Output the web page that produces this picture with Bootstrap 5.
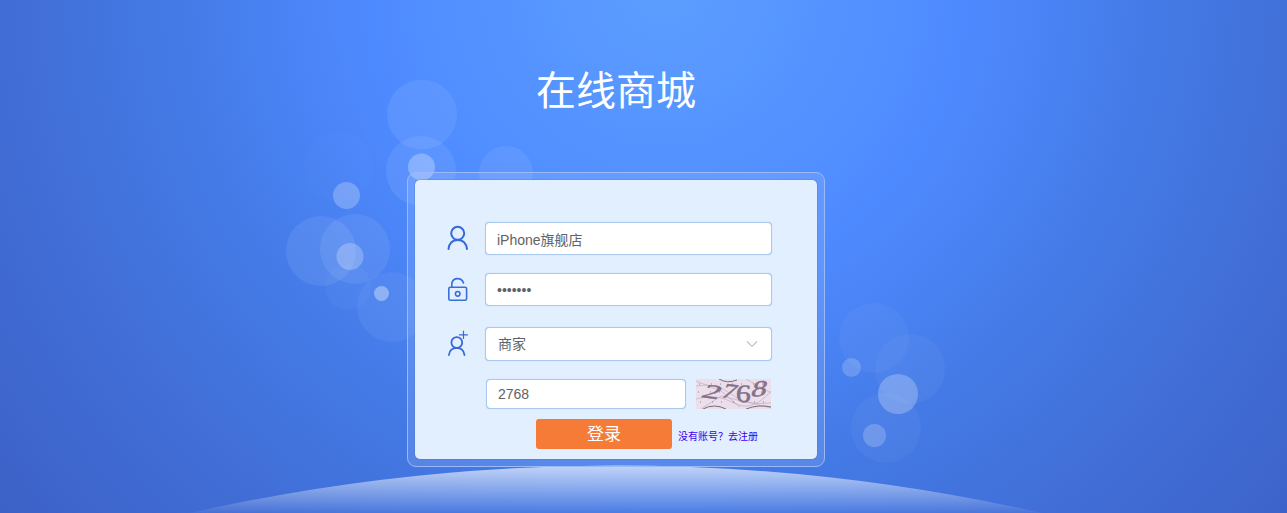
<!DOCTYPE html>
<html lang="zh-CN">
<head>
<meta charset="utf-8">
<title>在线商城</title>
<link rel="stylesheet" href="https://cdn.jsdelivr.net/npm/bootstrap@5.3.0/dist/css/bootstrap.min.css">
<style>
body{height:513px;font-family:"Liberation Sans","Noto Sans CJK SC",sans-serif;font-size:14px;color:#606266;
 background:radial-gradient(circle at 665px -10px,#5c9eff 0,#4e8aff 300px,#447ae6 490px,#416fd7 640px,#3d62c8 830px,#3b5fc4 900px)}
.scene{inset:0;width:1287px;height:513px}
.page-wrap{height:513px;padding-top:58px}
.title{font-size:40px;line-height:60px;font-weight:400;color:#fff;width:418px;margin:0 0 54px 407px;font-family:"Noto Sans CJK SC",sans-serif}
.login-frame{width:418px;height:295px;margin-left:407px;padding:7px;border:1px solid #9bb9f7;border-radius:9px;background:#ffffff1c}
.login-panel{height:279px;background:#e1efff;border-radius:5px;padding:42px 45px 0 32px;box-shadow:0 0 0 1px #4a78d855}
.line{height:34px}
.line+.line{margin-top:17px}
.line+.line.role-line{margin-top:20px}
.line svg.ico{width:24px;height:30px;flex:none;margin:1px 14px 0 0}
.field.form-control{height:33px;width:288px;padding:0 11px;border:1px solid #a9c9ed;border-radius:4px;font-size:14px;color:#606266;box-shadow:0 0 1px #a9c9ed}
.pick.field{height:34px;padding-right:13px;padding-left:12px}
.code-line{margin:18px 0 0 39px}
.code.form-control{height:30px;width:200px;padding-left:11px}
.captcha{width:75px;height:30px;margin-left:10px}
.submit-line{margin:10px 0 0 89px}
.btn-login.btn{width:136px;height:30px;padding:2px 0 0;border:0;border-radius:3px;background:#f57b36;color:#fff;font-size:17px;line-height:28px}
.reg{font-size:10px;color:#3d00f0;margin-left:6px;padding-top:6px;white-space:nowrap;line-height:14px;text-decoration:none}
</style>
</head>
<body class="m-0 overflow-hidden position-relative">
<svg class="scene position-absolute" viewBox="0 0 1287 513" aria-hidden="true">
 <defs><linearGradient id="hill" x1="0" y1="465" x2="0" y2="513" gradientUnits="userSpaceOnUse"><stop offset="0" stop-color="#fff" stop-opacity=".68"/><stop offset="1" stop-color="#fff" stop-opacity=".04"/></linearGradient></defs>
 <g fill="#fff">
 <circle cx="422" cy="114.500" r="35" opacity=".08"/><circle cx="421" cy="171" r="35" opacity=".08"/>
 <circle cx="421.500" cy="167" r="13.500" opacity=".27"/><circle cx="506" cy="173" r="27" opacity=".08"/>
 <circle cx="339" cy="167" r="35" opacity=".015"/><circle cx="346.500" cy="195.500" r="13.500" opacity=".24"/>
 <circle cx="321" cy="251" r="35" opacity=".08"/><circle cx="355" cy="249" r="35" opacity=".08"/>
 <circle cx="350" cy="256.500" r="13.500" opacity=".24"/><circle cx="348" cy="287" r="23" opacity=".03"/>
 <circle cx="392" cy="307" r="35" opacity=".055"/><circle cx="381.500" cy="293.500" r="7.500" opacity=".36"/>
 <circle cx="874" cy="338" r="35" opacity=".04"/><circle cx="910" cy="369" r="35" opacity=".04"/>
 <circle cx="886" cy="428" r="35" opacity=".04"/><circle cx="851.500" cy="367.500" r="9.500" opacity=".18"/>
 <circle cx="898" cy="394" r="20" opacity=".24"/><circle cx="874.500" cy="435.500" r="11.500" opacity=".2"/>
 </g>
 <path d="M190 513Q400 465.500 616 465.500T1042 513Z" fill="url(#hill)"/>
</svg>
<main class="page-wrap position-relative">
 <h1 class="title text-center">在线商城</h1>
 <div class="login-frame">
  <form class="login-panel">
   <div class="line d-flex align-items-start">
    <svg class="ico" viewBox="0 0 24 30" fill="none" stroke="#3768d8" stroke-width="2" stroke-linecap="round"><circle cx="10.700" cy="10.300" r="6.500"/><path d="M1.500 26C2.300 20 6 17 10.700 17S19.200 20 20 26"/></svg>
    <input class="field form-control" value="iPhone旗舰店">
   </div>
   <div class="line d-flex align-items-start">
    <svg class="ico" viewBox="0 0 24 30" fill="none" stroke="#3a6fd9" stroke-width="1.600" stroke-linecap="round"><rect x="1.800" y="13.300" width="17.800" height="13" rx="1.500"/><path d="M4.800 13V10.500C5 3 14.500 2.800 16.500 9"/><circle cx="10.700" cy="19.800" r="2.300"/></svg>
    <input type="password" class="field form-control" value="1234567">
   </div>
   <div class="line role-line d-flex align-items-start">
    <svg class="ico" viewBox="0 0 24 30" fill="none" stroke="#3768d8" stroke-width="1.800" stroke-linecap="round"><circle cx="9.800" cy="14.500" r="5.400"/><path d="M1.900 27C2.600 22 5.800 19.900 9.800 19.900S16.700 22 17.500 27"/><path d="M16.500 3V10.500M12.500 6.800H20.500" stroke-width="1.200"/></svg>
    <div class="field pick form-control d-flex align-items-center justify-content-between"><span>商家</span>
     <svg width="12" height="8" viewBox="0 0 12 8" fill="none" stroke="#c0c4cc" stroke-width="1.200"><path d="M1 1.500 6 6.500 11 1.500"/></svg></div>
   </div>
   <div class="code-line d-flex">
    <input class="field code form-control" value="2768">
    <svg class="captcha" viewBox="0 0 75 30"><rect width="75" height="30" fill="#eadfea"/>
     <g fill="none" stroke="#c3a3ba" stroke-width=".6"><path d="M0 7Q20 3 35 15T75 24M0 20Q20 14 38 24T75 12M0 2L25 12 44 28M50 0 75 14M5 30 25 17 75 29"/></g>
     <g fill="none" stroke="#786b78"><path d="M7 30Q18 24 30 30M50 30Q63 25 75 28M23 0Q31 5 41 1"/><path d="M3 5h70M2 13h70M4 23h68" stroke-width=".8" stroke-dasharray="1 11 1 8"/></g>
     <g fill="#857088" font-family="Liberation Serif" font-size="25" stroke="#857088" stroke-width=".5"><text transform="translate(4 18) rotate(7) skewX(-22) scale(1.450 .8)">2</text><text transform="translate(24 18) rotate(8) skewX(-15) scale(1.100 .85)">7</text><text transform="translate(39.500 22.500) rotate(3) scale(1.200 1)">6</text><text transform="translate(54 18) rotate(-6) skewX(-20) scale(1.250 .88)">8</text></g></svg>
   </div>
   <div class="submit-line d-flex align-items-center">
    <button type="button" class="btn btn-login">登录</button><a class="reg" href="#">没有账号？去注册</a>
   </div>
  </form>
 </div>
</main>
<script src="https://cdn.jsdelivr.net/npm/bootstrap@5.3.0/dist/js/bootstrap.bundle.min.js"></script>
</body>
</html>
